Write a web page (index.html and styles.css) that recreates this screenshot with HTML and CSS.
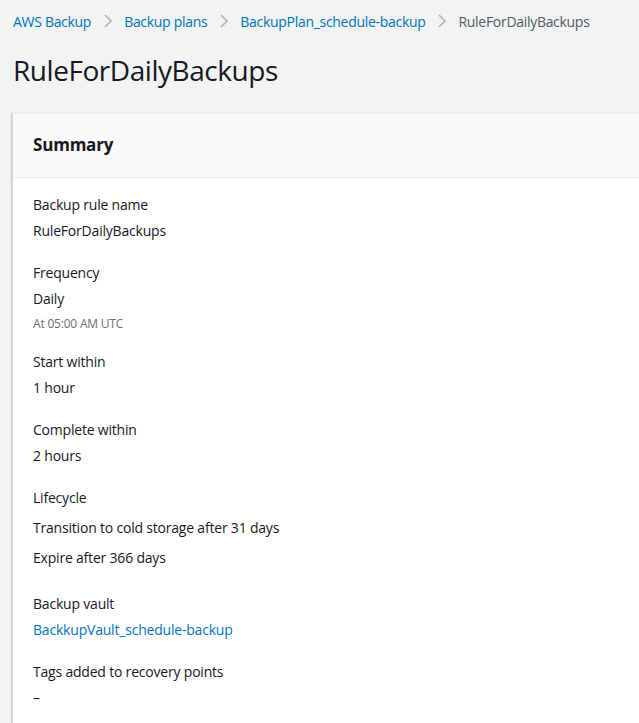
FILE: index.html
```html
<!DOCTYPE html>
<html>
<head>
<meta charset="utf-8">
<link rel="stylesheet" href="styles.css">
</head>
<body>
<div class="page">
  <nav class="crumbs">
    <a class="crumb-link">AWS Backup</a>
    <svg class="chev" width="8" height="14" viewBox="0 0 8 14"><path d="M1 1l6 6-6 6" fill="none" stroke="#aab7b8" stroke-width="1.6"/></svg>
    <a class="crumb-link">Backup plans</a>
    <svg class="chev" width="8" height="14" viewBox="0 0 8 14"><path d="M1 1l6 6-6 6" fill="none" stroke="#aab7b8" stroke-width="1.6"/></svg>
    <a class="crumb-link">BackupPlan_schedule-backup</a>
    <svg class="chev" width="8" height="14" viewBox="0 0 8 14"><path d="M1 1l6 6-6 6" fill="none" stroke="#aab7b8" stroke-width="1.6"/></svg>
    <span class="crumb-current">RuleForDailyBackups</span>
  </nav>
  <h1 class="title">RuleForDailyBackups</h1>
  <section class="card">
    <header class="card-head"><h2>Summary</h2></header>
    <div class="card-body">
      <div class="kv">
        <div class="label">Backup rule name</div>
        <div class="value">RuleForDailyBackups</div>
      </div>
      <div class="kv">
        <div class="label">Frequency</div>
        <div class="value">Daily</div>
        <div class="sub">At 05:00 AM UTC</div>
      </div>
      <div class="kv">
        <div class="label">Start within</div>
        <div class="value">1 hour</div>
      </div>
      <div class="kv">
        <div class="label">Complete within</div>
        <div class="value">2 hours</div>
      </div>
      <div class="kv">
        <div class="label">Lifecycle</div>
        <div class="value spaced">Transition to cold storage after 31 days</div>
        <div class="value spaced">Expire after 366 days</div>
      </div>
      <div class="kv">
        <div class="label">Backup vault</div>
        <div class="value"><a class="link">BackkupVault_schedule-backup</a></div>
      </div>
      <div class="kv">
        <div class="label">Tags added to recovery points</div>
        <div class="value">–</div>
      </div>
    </div>
  </section>
</div>
</body>
</html>
```

FILE: styles.css
```css
* { box-sizing: border-box; }
html, body {
  margin: 0;
  padding: 0;
  background: #f2f3f3;
  font-family: "Open Sans", "Noto Sans", sans-serif;
  color: #16191f;
  overflow: hidden;
}
.page {
  padding: 0 0 0 12px;
}
.crumbs {
  display: flex;
  align-items: center;
  height: 42px;
  padding-left: 1px;
  font-size: 14px;
  letter-spacing: -0.3px;
  white-space: nowrap;
}
.crumb-link { color: #0073bb; text-decoration: none; }
.crumb-current { color: #545b64; }
.chev { margin: 0 12px 0 13px; flex: none; }
.title {
  margin: 6px 0 0 1px;
  font-size: 28px;
  font-weight: 400;
  line-height: 44px;
  letter-spacing: -0.45px;
}
.card {
  margin-top: 21px;
  background: #fff;
  border-left: 1px solid #d5dbdb;
  border-top: 1px solid #eaeded;
  box-shadow: -1px 0 1px rgba(0,28,36,0.15);
}
.card-head {
  height: 64px;
  background: #fafafa;
  border-bottom: 1px solid #eaeded;
  display: flex;
  align-items: center;
  padding-left: 20px;
  padding-bottom: 2px;
}
.card-head h2 {
  margin: 0;
  font-size: 17px;
  font-weight: 700;
  letter-spacing: -0.2px;
}
.card-body {
  padding: 16px 20px 20px 20px;
  display: flex;
  flex-direction: column;
  gap: 20px;
  font-size: 14px;
  letter-spacing: -0.2px;
}
.kv { display: flex; flex-direction: column; }
.label, .value { line-height: 22px; }
.value { margin-top: 4px; }
.value.spaced { margin-top: 8px; }
.kv:nth-child(6) { margin-top: 4px; }
.sub {
  font-size: 12px;
  line-height: 16px;
  color: #687078;
  margin-top: 6px;
  margin-bottom: -1px;
}
.link { color: #0073bb; text-decoration: none; }
```
